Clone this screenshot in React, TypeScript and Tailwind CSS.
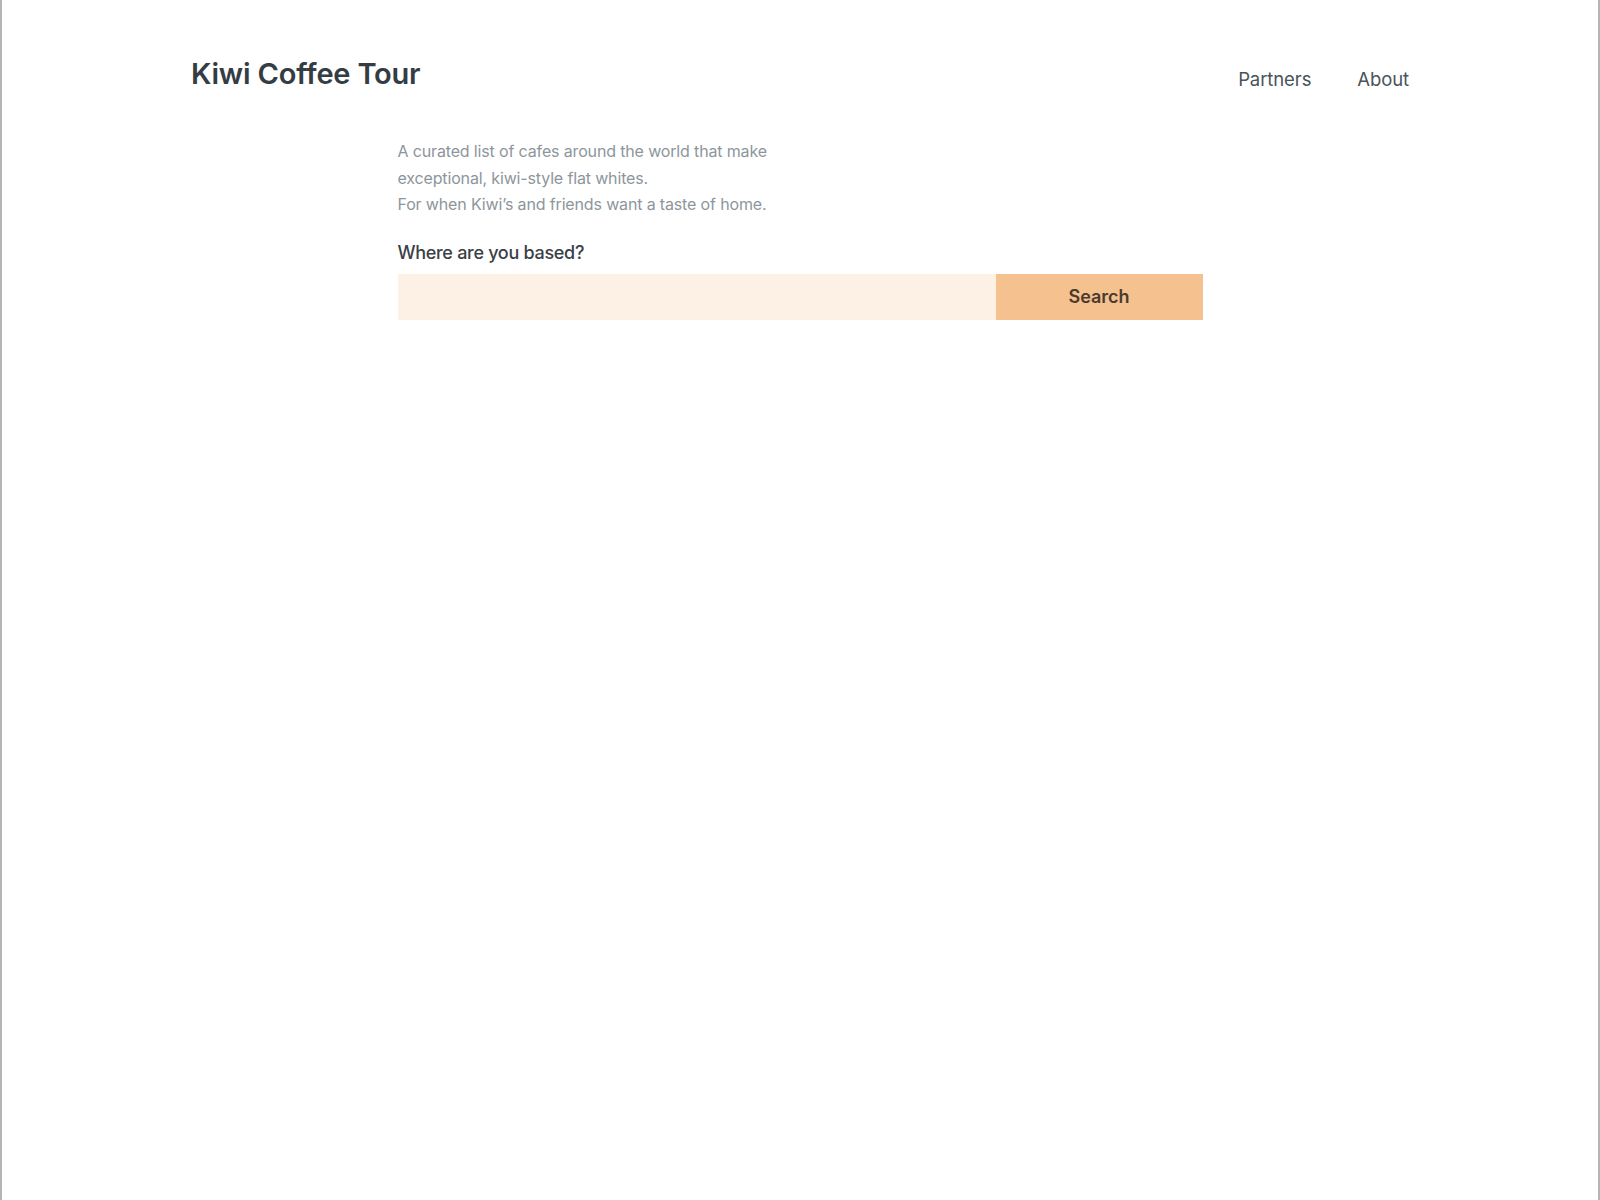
import React from "react";

export default function App() {
  return (
    <div
      className="w-full h-[1200px] bg-white border-x-2 border-[#b4b4b4]"
      style={{ fontFamily: "Inter, 'Noto Sans', sans-serif" }}
    >
      <header className="mx-auto w-[1218px] flex justify-between items-start pt-[56px]">
        <h1 className="text-[29px] leading-[36px] font-semibold text-[#343c44] tracking-[-0.2px]">
          Kiwi Coffee Tour
        </h1>
        <nav className="flex gap-[46px] mt-[11px] text-[18.5px] leading-[24px] text-[#4a535b] tracking-[-0.1px]">
          <a>Partners</a>
          <a>About</a>
        </nav>
      </header>
      <main className="mx-auto w-[805px] mt-[46px]">
        <p className="text-[16px] leading-[26.5px] text-[#8d969c] tracking-[-0.15px]">
          A curated list of cafes around the world that make
          <br />
          exceptional, kiwi-style flat whites.
          <br />
          For when Kiwi’s and friends want a taste of home.
        </p>
        <label className="block mt-[23px] text-[18px] leading-[24px] font-medium text-[#3a4046] tracking-[-0.3px]">
          Where are you based?
        </label>
        <div className="flex mt-[9px] h-[46px]">
          <input className="flex-1 h-full bg-[#fdf0e5] outline-none px-3 text-[16px]" />
          <button className="w-[207px] h-full bg-[#f5c18f] text-[18px] font-semibold text-[#4a3b2f]">
            Search
          </button>
        </div>
      </main>
    </div>
  );
}
